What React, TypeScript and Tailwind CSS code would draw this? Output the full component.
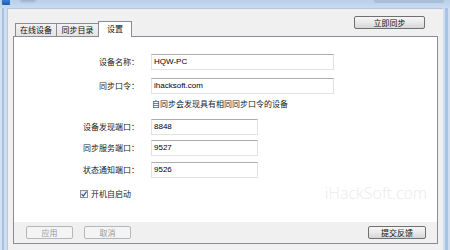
const cjk = "font-['Noto_Sans_CJK_SC',sans-serif]";

function WinButton({ label, width, disabled }: { label: string; width: string; disabled?: boolean }) {
  return (
    <div
      className={`${width} h-[13px] flex items-center justify-center rounded-[2px] border text-[8px] leading-none ${
        disabled
          ? 'border-[#b5b8bb] bg-[#f4f4f4] text-[#9a9a9a]'
          : 'border-[#707070] bg-linear-to-b from-[#f6f6f6] via-[#e9e9e9] to-[#d6d6d6] text-[#111]'
      }`}
    >
      {label}
    </div>
  );
}

function Field({ label, value, width }: { label: string; value: string; width: string }) {
  return (
    <div className="flex items-center">
      <div className="w-[125px] text-right text-[8px] leading-none text-[#1a1a1a]">{label}</div>
      <div
        className={`ml-[12px] ${width} h-[16px] flex items-center px-[2px] border border-[#dfe3e8] border-t-[#abadb3] bg-white font-['Liberation_Sans',sans-serif] text-[8px] leading-none text-black`}
      >
        {value}
      </div>
    </div>
  );
}

export default function App() {
  return (
    <div className={`w-[450px] h-[250px] bg-[#c6d9ee] flex flex-col overflow-hidden ${cjk}`}>
      {/* title bar */}
      <div className="h-[8px] flex items-start bg-linear-to-b from-[#b9d0ea] to-[#c9dbef]">
        <div className="ml-[2px] w-[8px] h-[5px] rounded-b-[1px] bg-linear-to-b from-[#3b7fd6] to-[#1a5bb4]" />
        <div className="ml-[10px] mt-[-2px] w-[16px] h-[4px] rounded-full bg-[#9fb2c9] blur-[1px]" />
        <div className="ml-auto mr-[6px] w-[70px] h-[3px] bg-[#a9bfd8] rounded-b-[2px]" />
      </div>

      <div className="flex-1 flex">
        {/* left frame */}
        <div className="w-[7px] flex">
          <div className="w-[2px] bg-[#d3e1f1]" />
          <div className="w-[2px] bg-[#a5c2e4]" />
          <div className="w-[3px] bg-[#d0dff0]" />
        </div>

        {/* client area */}
        <div className="flex-1 bg-[#f0f0f0] border-l border-t border-[#b7c6d8] pt-[7px] px-[5px] flex flex-col">
          {/* tabs + sync button */}
          <div className="h-[20px] flex justify-between items-end">
            <div className="flex items-end pl-[2px] relative z-10">
              <div className="w-[42px] h-[13px] flex items-center justify-center border border-b-0 border-[#898c95] bg-linear-to-b from-[#f2f2f2] to-[#e3e3e3] text-[8px] leading-none text-[#111]">
                在线设备
              </div>
              <div className="-ml-px w-[43px] h-[13px] flex items-center justify-center border border-b-0 border-[#898c95] bg-linear-to-b from-[#f2f2f2] to-[#e3e3e3] text-[8px] leading-none text-[#111]">
                同步目录
              </div>
              <div className="-ml-px -mb-px w-[34px] h-[16px] flex items-start justify-center pt-[3px] border border-b-0 border-[#898c95] bg-white text-[8px] leading-none text-[#111]">
                设置
              </div>
            </div>
            <div className="self-start mr-[13px]">
              <WinButton label="立即同步" width="w-[71px]" />
            </div>
          </div>

          {/* tab panel */}
          <div className="h-[208px] border border-[#898c95] flex flex-col relative">
            <div className="flex-1 bg-white pt-[17px] flex flex-col">
              <Field label="设备名称：" value="HQW-PC" width="w-[183px]" />
              <div className="mt-[8px]">
                <Field label="同步口令：" value="ihacksoft.com" width="w-[183px]" />
              </div>
              <div className="mt-[5px] ml-[138px] text-[8px] leading-[10px] text-[#1a1a1a]">
                自同步会发现具有相同同步口令的设备
              </div>
              <div className="mt-[10px]">
                <Field label="设备发现端口：" value="8848" width="w-[107px]" />
              </div>
              <div className="mt-[5px]">
                <Field label="同步服务端口：" value="9527" width="w-[107px]" />
              </div>
              <div className="mt-[6px]">
                <Field label="状态通知端口：" value="9526" width="w-[107px]" />
              </div>
              <div className="mt-[12px] ml-[66px] flex items-center">
                <div className="w-[8px] h-[8px] border border-[#8e8f8f] bg-linear-to-br from-[#e6e6e6] to-[#ffffff] flex items-center justify-center">
                  <svg width="6" height="6" viewBox="0 0 6 6">
                    <path d="M0.6 3.2 L2.3 5 L5.5 0.6" fill="none" stroke="#2d4fa0" strokeWidth="1.2" />
                  </svg>
                </div>
                <span className="ml-[3px] text-[8px] leading-none text-[#1a1a1a]">开机自启动</span>
              </div>
            </div>
            <div className="h-[21px] bg-[#f0f0f0] flex items-center px-[12px] gap-[11px]">
              <WinButton label="应用" width="w-[47px]" disabled />
              <WinButton label="取消" width="w-[47px]" disabled />
              <div className="ml-auto mr-[-1px]">
                <WinButton label="提交反馈" width="w-[58px]" />
              </div>
            </div>
            <div className="absolute right-[10px] top-[148px] font-['Open_Sans',sans-serif] font-light text-[16px] leading-none text-[#ebebeb]">
              iHackSoft.com
            </div>
          </div>
        </div>

        {/* right frame */}
        <div className="w-[7px] flex">
          <div className="w-[2px] bg-[#d0dff0]" />
          <div className="w-[3px] bg-[#a8c4e4]" />
          <div className="w-[2px] bg-[#cfdef0]" />
        </div>
      </div>
    </div>
  );
}
